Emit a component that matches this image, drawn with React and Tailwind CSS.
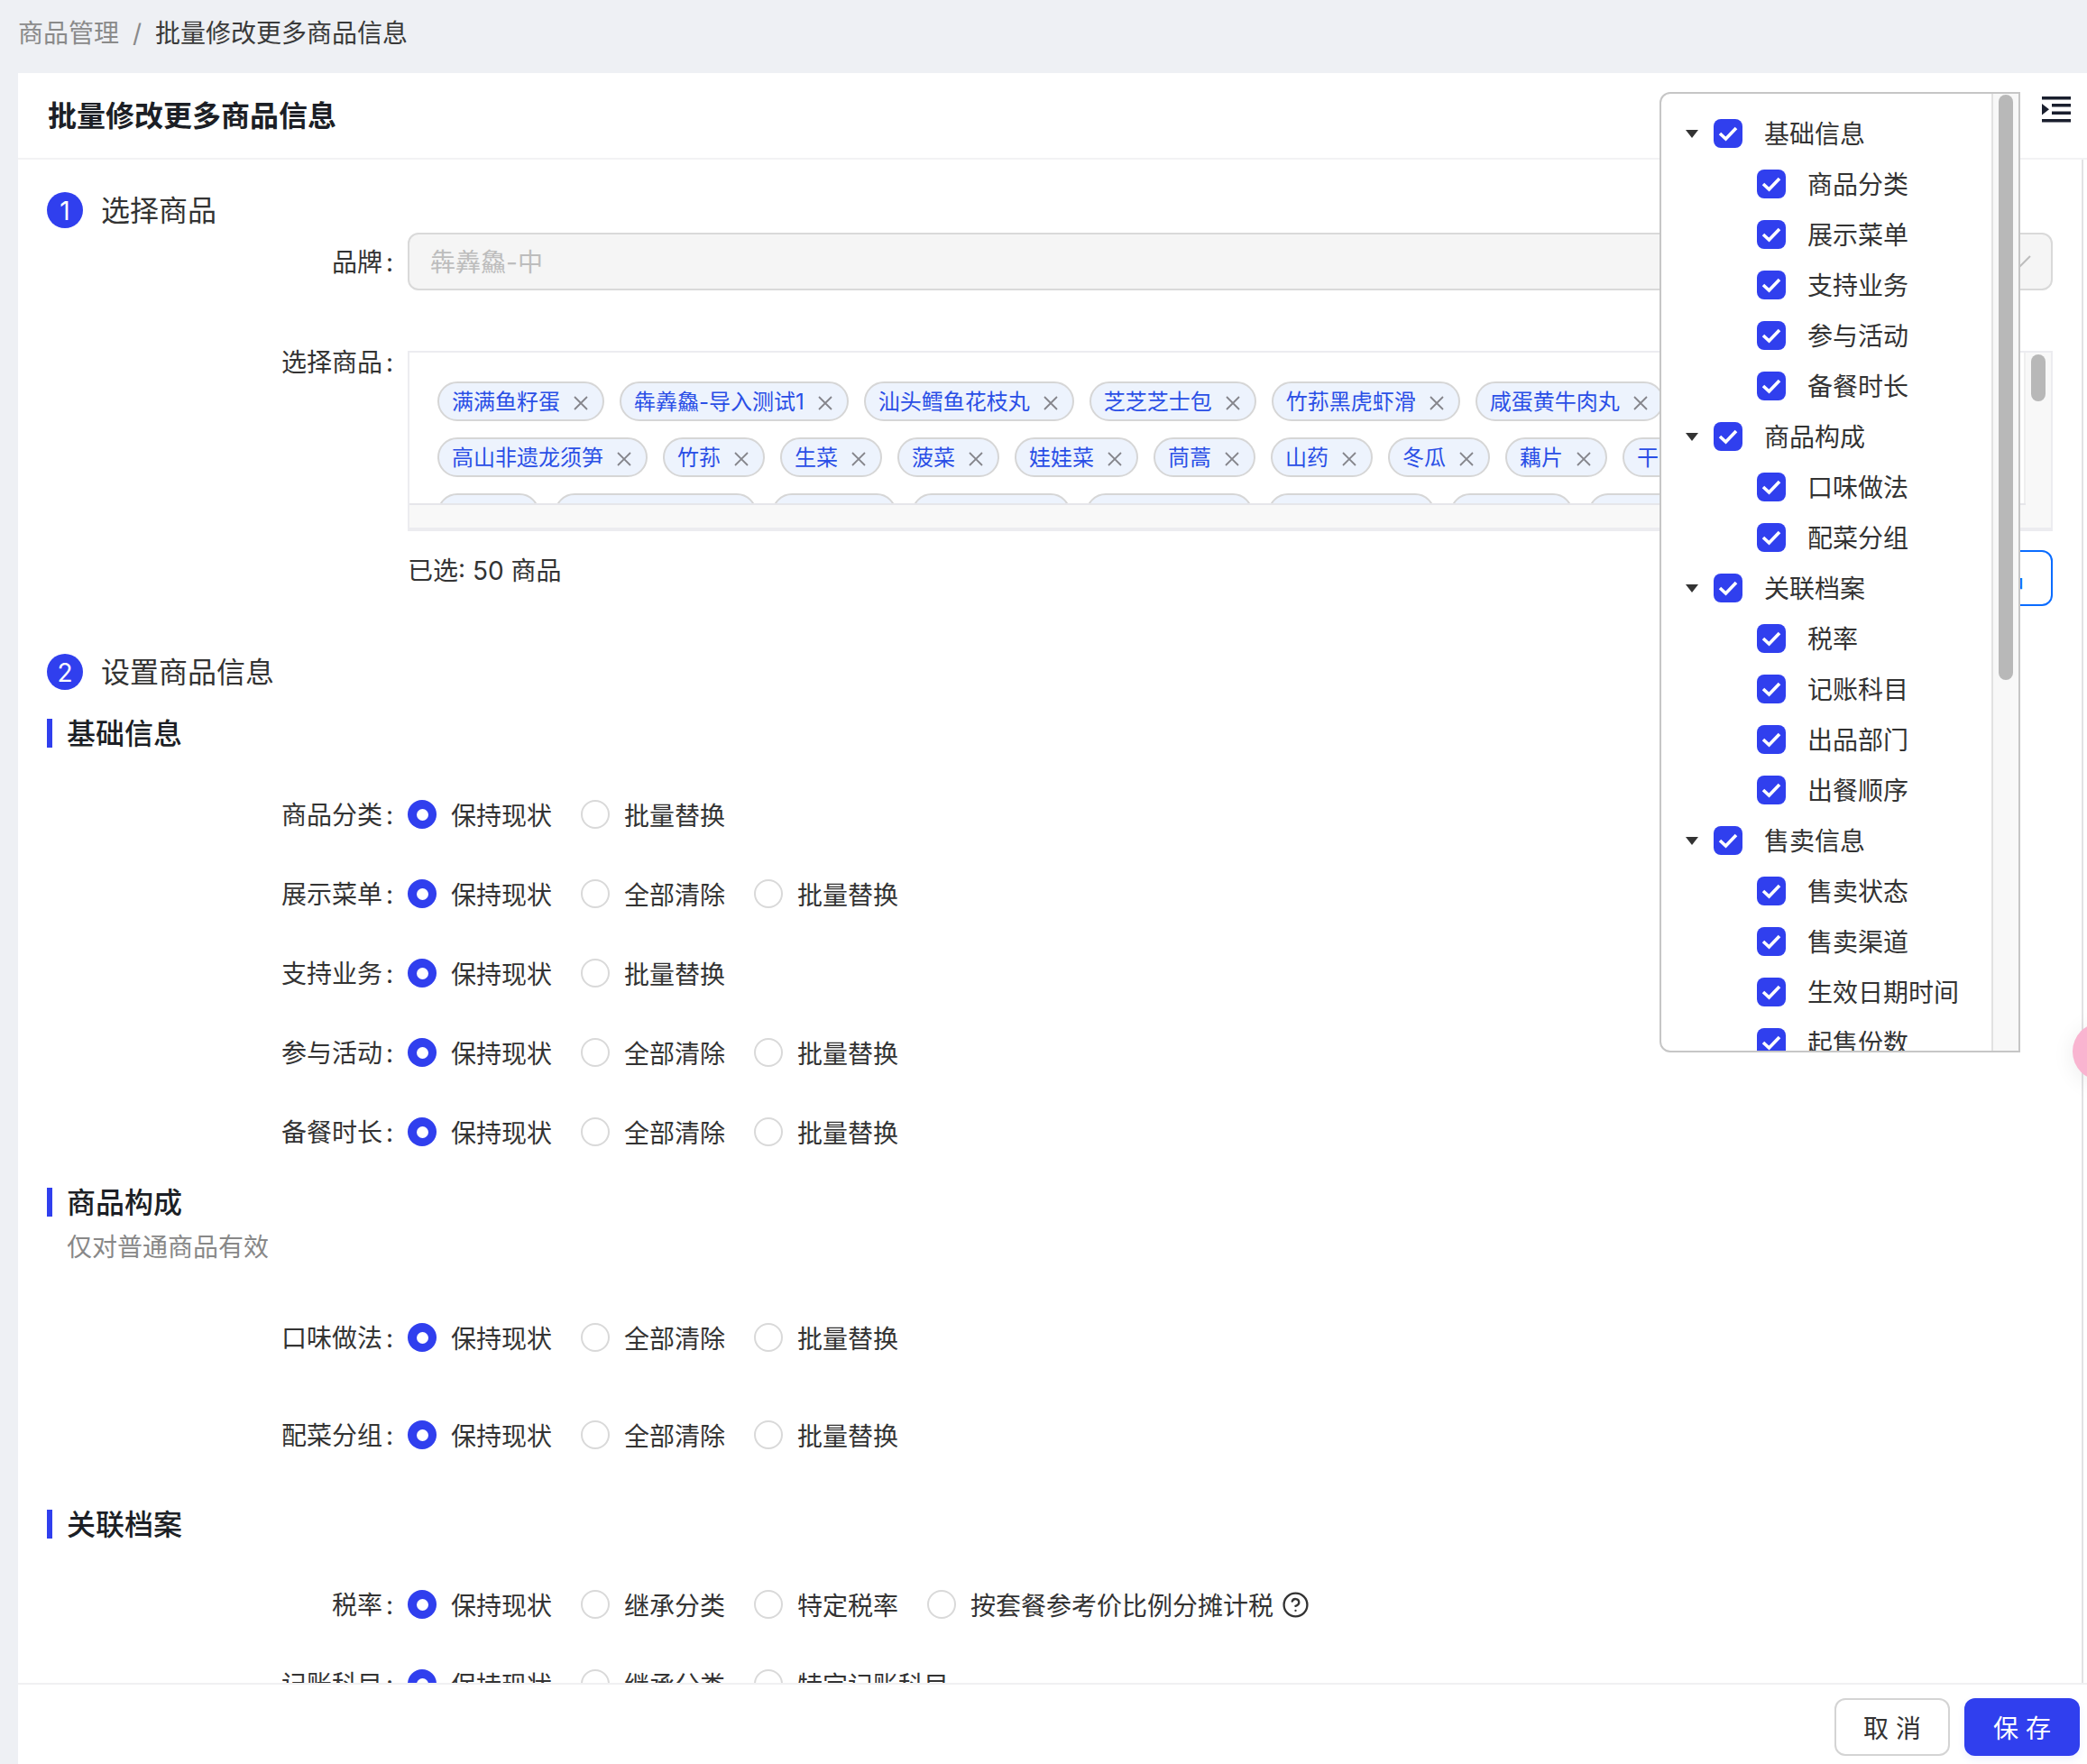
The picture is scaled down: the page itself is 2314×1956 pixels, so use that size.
import React from 'react';
import { CircleHelp } from 'lucide-react';

const tagRows = [
  ['满满鱼籽蛋', '犇羴鱻-导入测试1', '汕头鳕鱼花枝丸', '芝芝芝士包', '竹荪黑虎虾滑', '咸蛋黄牛肉丸'],
  ['高山非遗龙须笋', '竹荪', '生菜', '菠菜', '娃娃菜', '茼蒿', '山药', '冬瓜', '藕片', '干贝'],
];

// 第三行只露出顶部
const clippedTags = ['w-[113px]', 'w-[224px]', 'w-[138px]', 'w-[176px]', 'w-[185px]', 'w-[185px]', 'w-[136px]', 'w-[185px]'];

const tree = [
  { title: '基础信息', children: ['商品分类', '展示菜单', '支持业务', '参与活动', '备餐时长'] },
  { title: '商品构成', children: ['口味做法', '配菜分组'] },
  { title: '关联档案', children: ['税率', '记账科目', '出品部门', '出餐顺序'] },
  { title: '售卖信息', children: ['售卖状态', '售卖渠道', '生效日期时间', '起售份数'] },
];

const Tag = ({ text }) => (
  <div className="h-[44px] shrink-0 flex items-center gap-[15px] pl-[14px] pr-[16px] rounded-full border-2 border-[#d6d6d6] bg-[#edf3fd] text-[24px] text-[#2a4fe6]">
    <span className="whitespace-nowrap pt-[1px]">{text}</span>
    <svg width="16" height="16" viewBox="0 0 16 16" className="shrink-0 mt-[4px]">
      <path d="M1 1L15 15M15 1L1 15" stroke="#85858b" strokeWidth="1.8" fill="none" />
    </svg>
  </div>
);

const Radio = ({ label, checked, help }) => (
  <div className="flex items-center gap-[16px]">
    {checked ? (
      <span className="w-[32px] h-[32px] rounded-full bg-[#303fee] flex items-center justify-center">
        <span className="w-[13px] h-[13px] rounded-full bg-white" />
      </span>
    ) : (
      <span className="w-[32px] h-[32px] rounded-full border-2 border-[#d9d9d9] bg-white" />
    )}
    <span className="pt-[3px] text-[28px] leading-[40px] text-[#333] whitespace-nowrap">{label}</span>
    {help && <CircleHelp size={31} strokeWidth={1.8} className="text-[#333] -ml-[7px]" />}
  </div>
);

const FormLabel = ({ text }) => (
  <div className="w-[400px] shrink-0 pr-[16px] pt-[1px] flex justify-end text-[28px] leading-[40px] text-[#333]">
    <span>{text}</span>
    <span className="ml-[4px]">:</span>
  </div>
);

const RadioRow = ({ label, options, tall, help }) => (
  <div className={tall ? 'flex items-center h-[108px]' : 'flex items-center h-[88px]'}>
    <FormLabel text={label} />
    <div className="flex items-center gap-[32px]">
      {options.map((o, i) => (
        <Radio key={o} label={o} checked={i === 0} help={help && i === options.length - 1} />
      ))}
    </div>
  </div>
);

const Step = ({ no, title, className }) => (
  <div className={`flex items-center gap-[20px] h-[40px] ${className}`}>
    <span className="w-[40px] h-[40px] pt-[2px] rounded-full bg-[#303fee] text-white text-[28px] flex items-center justify-center">{no}</span>
    <span className="pt-[2px] text-[32px] text-[#333]">{title}</span>
  </div>
);

const SubTitle = ({ title, className }) => (
  <div className={`flex items-center h-[32px] border-l-[6px] border-[#303fee] pl-[16px] ${className}`}>
    <span className="pt-[2px] text-[32px] font-medium text-[#1c1f26]">{title}</span>
  </div>
);

const CheckBox = () => (
  <span className="w-[32px] h-[32px] shrink-0 rounded-[8px] bg-[#303fee] flex items-center justify-center">
    <svg width="22" height="18" viewBox="0 0 22 18">
      <path d="M2 9L8.5 15L20 3" stroke="#fff" strokeWidth="3.6" fill="none" />
    </svg>
  </span>
);

const Tree = () => (
  <div className="flex-1 min-w-0 pt-[16px] overflow-hidden text-[28px] text-[#333]">
    {tree.map((group) => (
      <div key={group.title}>
        <div className="h-[56px] flex items-center pl-[27px]">
          <svg width="14" height="9" viewBox="0 0 14 9" className="shrink-0 mr-[17px]">
            <path d="M0 0H14L7 9Z" fill="#333" />
          </svg>
          <CheckBox />
          <span className="ml-[24px] pt-[1px] whitespace-nowrap">{group.title}</span>
        </div>
        {group.children.map((c) => (
          <div key={c} className="h-[56px] flex items-center pl-[106px]">
            <CheckBox />
            <span className="ml-[24px] pt-[1px] whitespace-nowrap">{c}</span>
          </div>
        ))}
      </div>
    ))}
  </div>
);

export default function App() {
  return (
    <div className="relative w-[2314px] h-[1956px] overflow-hidden flex flex-col bg-[#eef0f4] font-['Inter','Noto_Sans_CJK_SC',sans-serif]">
      {/* 面包屑 */}
      <div className="h-[81px] shrink-0 pl-[20px] pb-[8px] flex items-center text-[28px]">
        <span className="text-[#8a8a8a]">商品管理</span>
        <span className="mx-[15px] text-[#8a8a8a]">/</span>
        <span className="text-[#3a3a3a]">批量修改更多商品信息</span>
      </div>

      <div className="flex-1 min-h-0 ml-[20px] flex flex-col bg-white">
        <div className="h-[96px] shrink-0 flex justify-between pl-[33px] pr-[18px] border-b-2 border-[#f2f2f4]">
          <span className="self-center pt-[1px] text-[32px] font-semibold text-[#1c1f26]">批量修改更多商品信息</span>
          <svg width="32" height="29" viewBox="0 0 32 29" className="mt-[26px]">
            <path d="M0 0H32V3.4H0ZM11 8H32V11.4H11ZM11 16.5H32V20H11ZM0 25H32V28.5H0ZM0 8V20.5L8 14.2Z" fill="#1a1f2e" />
          </svg>
        </div>

        <div className="flex-1 min-h-0 overflow-hidden pl-[32px] pr-[32px] mr-[4px] border-r-2 border-[#e2e2e4]">
          <Step no="1" title="选择商品" className="mt-[36px]" />

          <div className="flex items-center mt-[5px]">
            <FormLabel text="品牌" />
            <div className="flex-1 h-[64px] flex items-center justify-between pl-[23px] pr-[22px] rounded-[12px] border-2 border-[#d9d9d9] bg-[#f5f5f5]">
              <span className="pt-[2px] text-[28px] text-[#bdbdbd]">犇羴鱻-中</span>
              <svg width="26" height="15" viewBox="0 0 26 15">
                <path d="M1 1L13 13L25 1" stroke="#bdbdbd" strokeWidth="2" fill="none" />
              </svg>
            </div>
          </div>

          <div className="flex mt-[67px]">
            <div className="-mt-[8px]">
              <FormLabel text="选择商品" />
            </div>
            <div className="flex-1 min-w-0 h-[200px] flex border-2 border-b-4 border-[#ececf0] overflow-hidden">
              <div className="flex-1 min-w-0 flex flex-col">
                <div className="flex-1 min-h-0 overflow-hidden pt-[32px] pl-[31px] border-r-2 border-[#efefef] flex flex-col gap-[18px]">
                  {tagRows.map((row, i) => (
                    <div key={i} className="flex gap-[17px]">
                      {row.map((t) => (
                        <Tag key={t} text={t} />
                      ))}
                    </div>
                  ))}
                  <div className="flex gap-[17px]">
                    {clippedTags.map((w, i) => (
                      <div key={i} className={`${w} h-[44px] shrink-0 rounded-full border-2 border-[#d6d6d6] bg-[#edf3fd]`} />
                    ))}
                  </div>
                </div>
                <div className="h-[27px] shrink-0 bg-[#f8f8f8] border-t-2 border-[#e6e6ea]" />
              </div>
              <div className="w-[28px] shrink-0 bg-[#f8f8f8] pl-[6px] pt-[2px]">
                <div className="w-[16px] h-[52px] rounded-full bg-[#b8b8b8]" />
              </div>
            </div>
          </div>

          <div className="flex items-start justify-between mt-[21px] pl-[400px]">
            <span className="mt-[3px] text-[28px] leading-[40px] text-[#333]">已选: 50 商品</span>
            <div className="h-[62px] flex items-center pl-[32px] pr-[30px] rounded-[12px] border-2 border-[#0a6cff] bg-white text-[28px] text-[#0a6cff]">选择商品</div>
          </div>

          <Step no="2" title="设置商品信息" className="mt-[53px]" />

          <SubTitle title="基础信息" className="mt-[32px]" />
          <div className="mt-[30px]">
            <RadioRow label="商品分类" options={['保持现状', '批量替换']} />
            <RadioRow label="展示菜单" options={['保持现状', '全部清除', '批量替换']} />
            <RadioRow label="支持业务" options={['保持现状', '批量替换']} />
            <RadioRow label="参与活动" options={['保持现状', '全部清除', '批量替换']} />
            <RadioRow label="备餐时长" options={['保持现状', '全部清除', '批量替换']} />
          </div>

          <SubTitle title="商品构成" className="mt-[18px]" />
          <div className="mt-[14px] h-[40px] pl-[22px] text-[28px] leading-[40px] text-[#888]">仅对普通商品有效</div>
          <div className="mt-[26px]">
            <RadioRow tall label="口味做法" options={['保持现状', '全部清除', '批量替换']} />
            <RadioRow tall label="配菜分组" options={['保持现状', '全部清除', '批量替换']} />
          </div>

          <SubTitle title="关联档案" className="mt-[29px]" />
          <div className="mt-[29px]">
            <RadioRow help label="税率" options={['保持现状', '继承分类', '特定税率', '按套餐参考价比例分摊计税']} />
            <RadioRow label="记账科目" options={['保持现状', '继承分类', '特定记账科目']} />
          </div>
        </div>

        <div className="h-[90px] shrink-0 flex items-start justify-end gap-[16px] pt-[15px] pr-[8px] border-t-2 border-[#f0f0f2]">
          <button className="w-[128px] h-[64px] pt-[3px] rounded-[12px] border-2 border-[#d4d4d4] bg-white text-[28px] text-[#333]">取 消</button>
          <button className="w-[128px] h-[64px] pt-[3px] rounded-[12px] bg-[#303fee] text-[28px] text-white shadow-[0_4px_8px_rgba(48,63,238,0.08)]">保 存</button>
        </div>
      </div>

      {/* 字段设置浮层 */}
      <div className="absolute left-[1840px] top-[102px] w-[400px] h-[1065px] flex overflow-hidden bg-white border-2 border-[#c6c6c6] rounded-l-[12px]">
        <Tree />
        <div className="w-[30px] shrink-0 bg-[#f8f8f8] border-l-2 border-[#e2e2e2] pl-[6px] pt-[1px]">
          <div className="w-[16px] h-[649px] rounded-full bg-[#b8b8b8]" />
        </div>
      </div>

      {/* 悬浮球 */}
      <div className="absolute left-[2298px] top-[1134px] w-[64px] h-[64px] rounded-full bg-[#f9b4d0] shadow-[0_4px_24px_rgba(0,0,0,0.08)]" />
    </div>
  );
}
